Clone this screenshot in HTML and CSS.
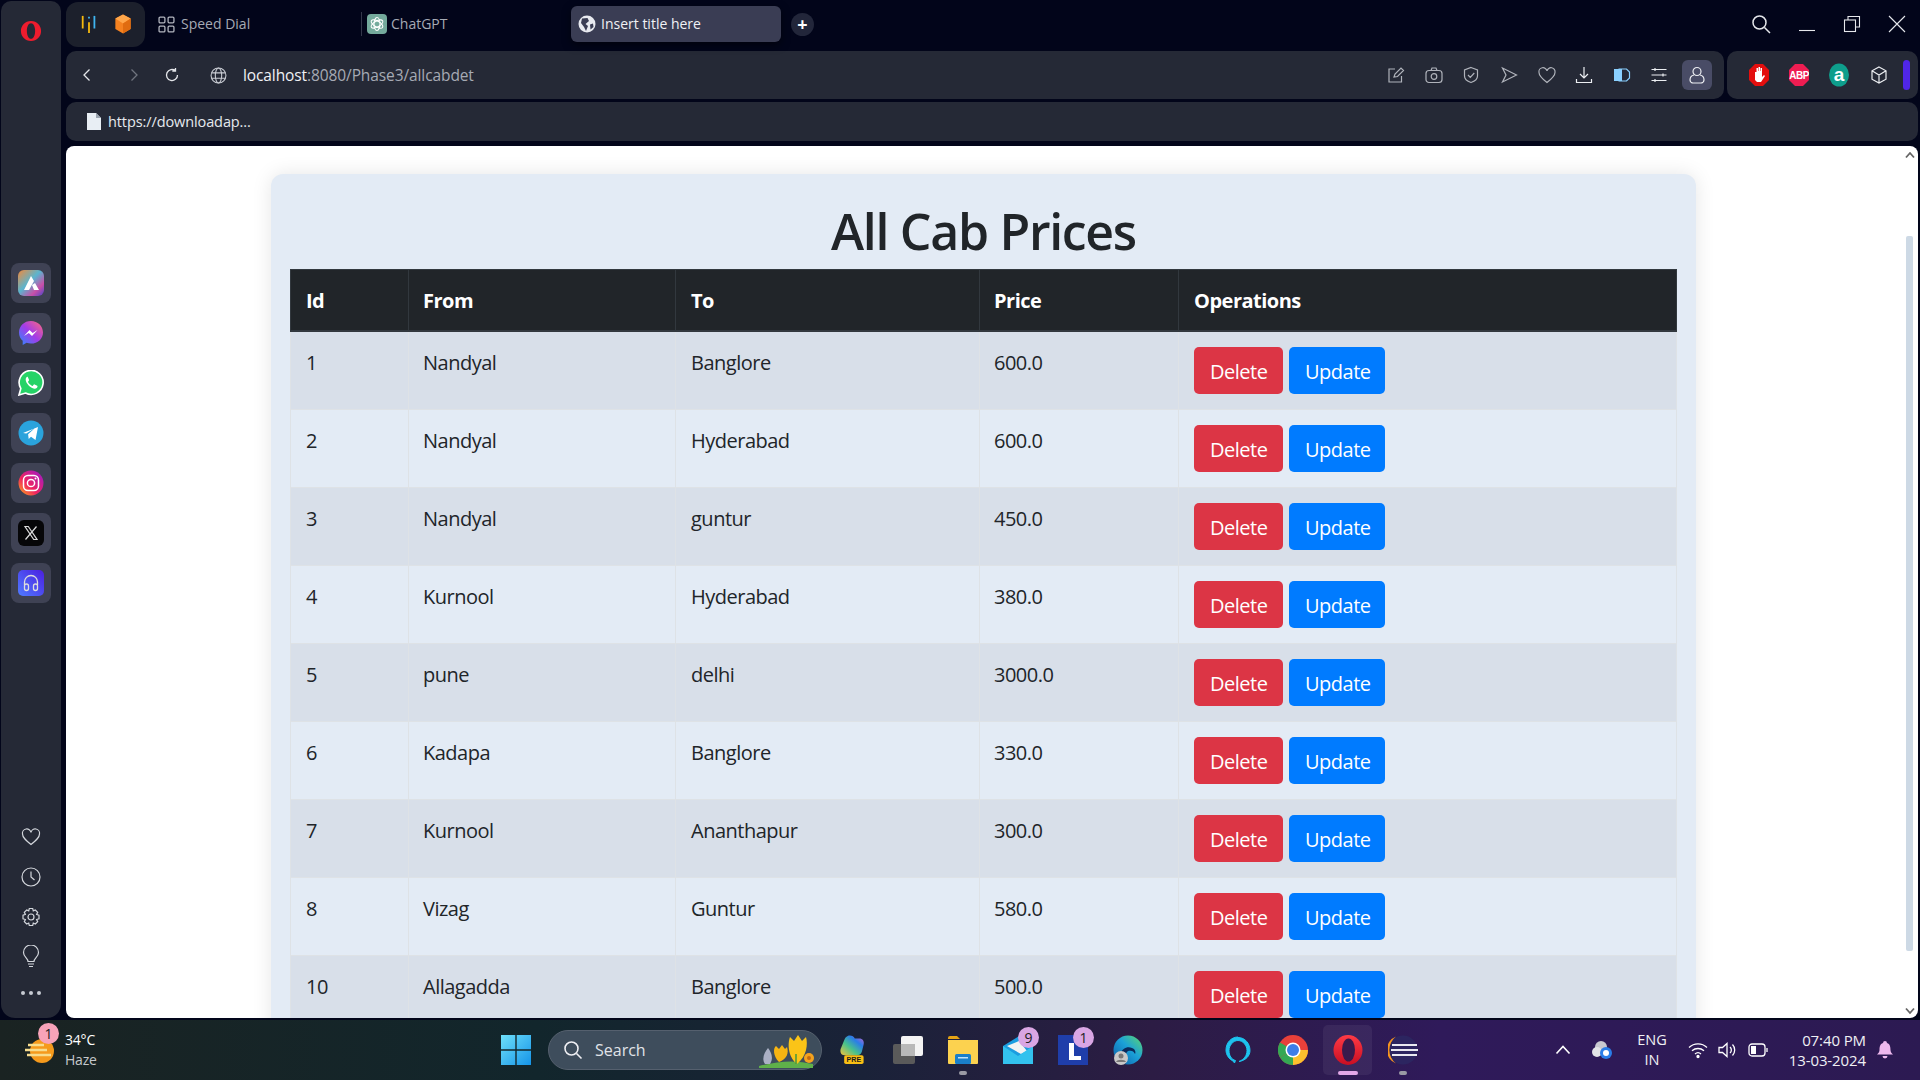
FILE: index.html
```html
<!DOCTYPE html>
<html lang="en">
<head>
<meta charset="utf-8">
<title>Insert title here</title>
<link rel="stylesheet" href="styles.css">
</head>
<body>
<div class="desktop">
  <div class="browser">
    <aside class="sidebar">
      <svg class="opera-logo" viewBox="0 0 24 24"><path fill-rule="evenodd" d="M12 1c6.500 0 11 5 11 11s-4.500 11-11 11S1 18 1 12 5.500 1 12 1zm0 2.500c-2.800 0-4.500 3.800-4.500 8.500s1.700 8.500 4.500 8.500 4.500-3.800 4.500-8.500S14.800 3.500 12 3.500z" fill="#ee1c2e"/></svg>
      <div class="side-apps">
        <div class="tile"><svg viewBox="0 0 26 26"><defs><linearGradient id="ga" x1="0" y1="0" x2="1" y2="1"><stop offset="0" stop-color="#f08a3c"/><stop offset=".45" stop-color="#5ab5cf"/><stop offset=".75" stop-color="#c84fa8"/><stop offset="1" stop-color="#4a44c8"/></linearGradient></defs><rect width="26" height="26" rx="6" fill="url(#ga)"/><path d="M6 20 13 6l3 5-5 9zM14 15l3-2 4 7h-5z" fill="#fff"/></svg></div>
        <div class="tile"><svg viewBox="0 0 26 26"><defs><linearGradient id="gm" x1="0" y1="1" x2="1" y2="0"><stop offset="0" stop-color="#2a8cff"/><stop offset=".5" stop-color="#a33be8"/><stop offset="1" stop-color="#ff6b7d"/></linearGradient></defs><path d="M13 1C6.200 1 1 5.900 1 12.400c0 3.400 1.400 6.300 3.700 8.300V25l3.900-2.200c1.400.5 2.900.7 4.400.7 6.800 0 12-4.900 12-11.100S19.800 1 13 1z" fill="url(#gm)"/><path d="m6 16 5.500-6 3.200 3 4.800-3-5.500 6-3.200-3z" fill="#fff"/></svg></div>
        <div class="tile"><svg viewBox="0 0 26 26"><path d="M1 25l1.800-6.500A12 12 0 1 1 7.500 23z" fill="#25d366" stroke="#fff" stroke-width="1.600"/><path d="M9.300 6.800c-.5 0-1.600.9-1.600 2.900 0 3.200 4.500 8.400 8.700 9 1.800.2 3.100-1.100 3.100-2.200 0-.5 0-.7-.3-.8l-2.700-1.300c-.4-.2-.6 0-.8.300l-.9 1.100c-.2.200-.4.200-.7.100-1.800-.8-3.200-2.100-4.100-3.800-.1-.3 0-.5.200-.7l.7-.9c.2-.2.200-.4.100-.7L9.900 7.200c-.2-.3-.3-.4-.6-.4z" fill="#fff"/></svg></div>
        <div class="tile"><svg viewBox="0 0 26 26"><circle cx="13" cy="13" r="12.500" fill="#2aa3dc"/><path d="M5 13 20 7l-2.500 13-4.500-3.300-2.300 2.200-.6-4.600 6.900-6.300-8.700 5.500z" fill="#fff"/></svg></div>
        <div class="tile"><svg viewBox="0 0 26 26"><defs><linearGradient id="gi" x1="0" y1="1" x2="1" y2="0"><stop offset="0" stop-color="#fdb414"/><stop offset=".4" stop-color="#f0245f"/><stop offset="1" stop-color="#9a18d0"/></linearGradient></defs><circle cx="13" cy="13" r="12.500" fill="url(#gi)"/><rect x="5.500" y="5.500" width="15" height="15" rx="4.500" fill="none" stroke="#fff" stroke-width="1.500"/><circle cx="13" cy="13" r="3.600" fill="none" stroke="#fff" stroke-width="1.500"/><circle cx="17.500" cy="8.500" r="1" fill="#fff"/></svg></div>
        <div class="tile"><svg viewBox="0 0 26 26"><rect width="26" height="26" rx="6" fill="#060608"/><path d="M7 6.500h3.300l8.700 13h-3.300zM18.500 6.500 7.500 19.500" fill="none" stroke="#ddd" stroke-width="1.200"/></svg></div>
        <div class="tile"><svg viewBox="0 0 26 26"><defs><linearGradient id="gh" x1="0" y1="1" x2="1" y2="0"><stop offset="0" stop-color="#4f7bff"/><stop offset="1" stop-color="#4b1fe0"/></linearGradient></defs><rect width="26" height="26" rx="5" fill="url(#gh)"/><path d="M6.500 15v-3a6.500 6.500 0 0 1 13 0v3" fill="none" stroke="#ddd" stroke-width="1.300"/><rect x="6.500" y="14" width="4" height="6.500" rx="2" fill="none" stroke="#ddd" stroke-width="1.300"/><rect x="15.500" y="14" width="4" height="6.500" rx="2" fill="none" stroke="#ddd" stroke-width="1.300"/></svg></div>
      </div>
      <div class="side-tools">
        <svg class="ico-side" viewBox="0 0 20 20"><path d="M10 17.500C5 13.500 1.500 10.700 1.500 7A4.200 4.200 0 0 1 10 5.500 4.200 4.200 0 0 1 18.500 7c0 3.700-3.500 6.500-8.500 10.500z"/></svg>
        <svg class="ico-side" viewBox="0 0 20 20"><circle cx="10" cy="10" r="9"/><path d="M10 4.500V10l3.500 3"/></svg>
        <svg class="ico-side" viewBox="0 0 20 20"><circle cx="10" cy="10" r="3"/><path d="M8.300 1.500h3.400l.6 2.400 2-.9 2.400 2.400-1.100 2.100 2.400.8v3.400l-2.400.8 1.100 2.100-2.400 2.400-2-1-.6 2.500H8.300l-.6-2.500-2 1-2.400-2.400 1.100-2.100-2.400-.8V8.200l2.400-.8-1.100-2.100L5.700 3l2 .9z"/></svg>
        <svg class="ico-side ico-bulb" viewBox="0 0 20 24"><path d="M7 16.500c0-3.500-4.500-4.500-4.500-9a7.500 7.500 0 0 1 15 0c0 4.500-4.500 5.500-4.500 9zM7 19h6M8 21.500h4"/></svg>
        <div class="dots"><i></i><i></i><i></i></div>
      </div>
    </aside>
    <div class="main-col">
      <header class="tabbar">
        <div class="pinned">
          <svg class="pin" viewBox="0 0 20 24"><path d="M3 3v14M3 3" stroke="#f5b90f" stroke-width="2"/><path d="M10 10v12" stroke="#f5b90f" stroke-width="2"/><path d="M10 4v2" stroke="#3fb4f0" stroke-width="2"/><path d="M16 3v14" stroke="#3fb4f0" stroke-width="2"/></svg>
          <svg class="pin" viewBox="0 0 20 24"><path d="M10 1.500 18.500 6v11.500L10 22.500 1.500 17.500V6z" fill="#f58220"/><path d="M10 11.500 18.500 6 10 1.500 1.500 6z" fill="#ffa64a"/><path d="M10 11.500v11l8.500-5V6z" fill="#e06c10"/></svg>
        </div>
        <div class="tab tab-dial">
          <svg class="dial-ico" viewBox="0 0 16 16"><rect x="1" y="1" width="5.500" height="5.500" rx="1"/><rect x="9.500" y="1" width="5.500" height="5.500" rx="1"/><rect x="1" y="9.500" width="5.500" height="5.500" rx="1"/><rect x="9.500" y="9.500" width="5.500" height="5.500" rx="1"/></svg>
          <span>Speed Dial</span>
        </div>
        <div class="tab tab-gpt">
          <svg class="gpt-ico" viewBox="0 0 20 20"><rect width="20" height="20" rx="4" fill="#74aa9c"/><g fill="none" stroke="#fff" stroke-width="1.100"><ellipse cx="10" cy="10" rx="3" ry="6.500"/><ellipse cx="10" cy="10" rx="3" ry="6.500" transform="rotate(60 10 10)"/><ellipse cx="10" cy="10" rx="3" ry="6.500" transform="rotate(120 10 10)"/></g></svg>
          <span>ChatGPT</span>
        </div>
        <div class="tab tab-active">
          <svg class="web-ico" viewBox="0 0 18 18"><circle cx="9" cy="9" r="8.500" fill="#e8eaf0"/><path d="M4 3.500 9.500 3 11 6 7.500 9l2.500 2-2 5L6 12 3 8zM12 9.500l3-1 .5 3.500-3 2.500z" fill="#3a3d54"/></svg>
          <span>Insert title here</span>
        </div>
        <div class="newtab">+</div>
        <div class="win-controls">
          <svg class="win-search" viewBox="0 0 20 20"><circle cx="8.500" cy="8.500" r="6.500"/><path d="m13.500 13.500 5.500 5.500"/></svg>
          <svg class="win-btn" viewBox="0 0 18 18"><path d="M1 15.500h16"/></svg>
          <svg class="win-btn" viewBox="0 0 18 18"><rect x="1.500" y="5" width="11" height="11.500"/><path d="M5 5V1.500h11.500V12H12.500"/></svg>
          <svg class="win-btn" viewBox="0 0 18 18"><path d="m1 1 16 16M17 1 1 17"/></svg>
        </div>
      </header>
      <div class="toolrow">
        <div class="addressbar">
          <svg class="nav-ico" viewBox="0 0 16 16"><path d="M10.500 2.500 5 8l5.500 5.500"/></svg>
          <svg class="nav-ico nav-dim" viewBox="0 0 16 16"><path d="M5.500 2.500 11 8l-5.500 5.500"/></svg>
          <svg class="nav-ico" viewBox="0 0 16 16"><path d="M13.500 8A5.500 5.500 0 1 1 11.500 3.800M11.500 1v3.200H8.300"/></svg>
          <svg class="nav-ico nav-globe" viewBox="0 0 16 16"><circle cx="8" cy="8" r="7"/><ellipse cx="8" cy="8" rx="3" ry="7"/><path d="M1.500 5.500h13M1.500 10.500h13"/></svg>
          <div class="url"><b>localhost</b>:8080/Phase3/allcabdet</div>
          <div class="addr-tools">
            <svg class="tool" viewBox="0 0 18 18"><path d="M14.500 10v6H2V3h6M7 11l1-3 6-6 2.500 2.500-6 6z"/></svg>
            <svg class="tool" viewBox="0 0 18 18"><rect x="1" y="4.500" width="16" height="12" rx="3"/><path d="M6 4.500 7 2h4l1 2.500"/><circle cx="9" cy="10.500" r="2.800"/></svg>
            <svg class="tool" viewBox="0 0 18 18"><path d="M9 1.500 15.500 4v6c0 3.500-3.500 5.500-6.500 6.500C6 15.500 2.500 13.500 2.500 10V4zM6 9l2.300 2.300L12.300 7"/></svg>
            <svg class="tool" viewBox="0 0 18 18"><path d="M2.500 2 16.500 9 2.500 16 6 9z"/></svg>
            <svg class="tool" viewBox="0 0 18 18"><path d="M9 16.500C4.500 13 1 10.200 1 6.500A4 4 0 0 1 9 5 4 4 0 0 1 17 6.500c0 3.700-3.500 6.500-8 10z"/></svg>
            <svg class="tool tool-bright" viewBox="0 0 18 18"><path d="M9 1v10.500M5 8l4 4 4-4M1.500 13v3.500h15V13"/></svg>
            <svg class="tool" viewBox="0 0 18 18"><path d="M5.500 3h8l3 3v6l-3 3h-8" stroke="#8ad0ff"/><path d="M1 3h8v12H1z" fill="#8ad0ff" stroke="none"/></svg>
            <svg class="tool tool-bright" viewBox="0 0 18 18"><path d="M1.500 3.500h15M1.500 9h15M1.500 14.500h15M5 2v3M13 7.500v3M5 13v3"/></svg>
            <div class="profile"><svg class="tool tool-bright" viewBox="0 0 18 18"><circle cx="9" cy="5.500" r="4"/><path d="M6 9c-3 .5-4 3-4 5 0 2 2 3 3 3h8c1 0 3-1 3-3 0-2-1-4.500-4-5"/></svg></div>
          </div>
        </div>
        <div class="extbar">
          <svg class="ext" viewBox="0 0 20 24"><path d="M6 1h8l6 6v10l-6 6H6l-6-6V7z" fill="#e30e0e"/><path d="M6 17V9h1.500v-4H9v3h.5V4H11v4h.5V5H13v9l2-2 1 1-4 6H8z" fill="#fff"/></svg>
          <svg class="ext" viewBox="0 0 20 24"><path d="M6 1h8l6 6v10l-6 6H6l-6-6V7z" fill="#ee1d52"/><text x="10" y="16" class="ext-abp">ABP</text></svg>
          <svg class="ext" viewBox="0 0 20 24"><ellipse cx="10" cy="12" rx="10" ry="11.500" fill="#0e9e8c"/><text x="10" y="18" class="ext-a">a</text></svg>
          <svg class="tool ext-box" viewBox="0 0 18 18"><path d="M9 1 16 4.800v8.400L9 17l-7-3.800V4.800zM2 4.800 9 9l7-4.200M9 9v8"/></svg>
          <div class="ext-bar"></div>
        </div>
      </div>
      <div class="bookmarks">
        <svg class="file-ico" viewBox="0 0 14 17"><path d="M0 0h9l5 5v12H0z" fill="#e8eef4"/><path d="M9 0v5h5" fill="#9aa4b0"/></svg>
        <span>https://downloadap...</span>
      </div>
      <div class="viewport">
        <main class="page">
          <section class="card">
            <h1>All Cab Prices</h1>
            <table class="prices">
              <colgroup><col class="c-id"><col class="c-from"><col class="c-to"><col class="c-price"><col></colgroup>
              <thead><tr><th>Id</th><th>From</th><th>To</th><th>Price</th><th>Operations</th></tr></thead>
              <tbody>
                <tr><td>1</td><td>Nandyal</td><td>Banglore</td><td>600.0</td><td class="ops"><a class="btn red">Delete</a><a class="btn blue">Update</a></td></tr>
                <tr><td>2</td><td>Nandyal</td><td>Hyderabad</td><td>600.0</td><td class="ops"><a class="btn red">Delete</a><a class="btn blue">Update</a></td></tr>
                <tr><td>3</td><td>Nandyal</td><td>guntur</td><td>450.0</td><td class="ops"><a class="btn red">Delete</a><a class="btn blue">Update</a></td></tr>
                <tr><td>4</td><td>Kurnool</td><td>Hyderabad</td><td>380.0</td><td class="ops"><a class="btn red">Delete</a><a class="btn blue">Update</a></td></tr>
                <tr><td>5</td><td>pune</td><td>delhi</td><td>3000.0</td><td class="ops"><a class="btn red">Delete</a><a class="btn blue">Update</a></td></tr>
                <tr><td>6</td><td>Kadapa</td><td>Banglore</td><td>330.0</td><td class="ops"><a class="btn red">Delete</a><a class="btn blue">Update</a></td></tr>
                <tr><td>7</td><td>Kurnool</td><td>Ananthapur</td><td>300.0</td><td class="ops"><a class="btn red">Delete</a><a class="btn blue">Update</a></td></tr>
                <tr><td>8</td><td>Vizag</td><td>Guntur</td><td>580.0</td><td class="ops"><a class="btn red">Delete</a><a class="btn blue">Update</a></td></tr>
                <tr><td>10</td><td>Allagadda</td><td>Banglore</td><td>500.0</td><td class="ops"><a class="btn red">Delete</a><a class="btn blue">Update</a></td></tr>
              </tbody>
            </table>
          </section>
        </main>
        <div class="scrollbar">
          <svg class="sb-arrow" viewBox="0 0 10 8"><path d="M1 6.500 5 2l4 4.500"/></svg>
          <div class="sb-thumb"></div>
          <svg class="sb-arrow" viewBox="0 0 10 8"><path d="M1 1.500 5 6l4-4.500"/></svg>
        </div>
      </div>
    </div>
  </div>
  <footer class="taskbar">
    <div class="weather">
      <div class="weather-ico">
        <svg viewBox="0 0 30 30"><circle cx="17" cy="16" r="12" fill="#f59a1c"/><path d="M3 10h16M0 15h22M2 20h24" stroke="#f7dc8c" stroke-width="2.600"/></svg>
        <span class="badge badge-pink">1</span>
      </div>
      <div class="weather-text"><span class="temp">34°C</span><span>Haze</span></div>
    </div>
    <div class="task-center">
      <svg class="winlogo" viewBox="0 0 30 30"><defs><linearGradient id="gw" x1="0" y1="0" x2="1" y2="1"><stop offset="0" stop-color="#6ee0fa"/><stop offset="1" stop-color="#1594e8"/></linearGradient></defs><path d="M0 0h14.300v14.300H0zM15.700 0H30v14.300H15.700zM0 15.700h14.300V30H0zM15.700 15.700H30V30H15.700z" fill="url(#gw)"/></svg>
      <div class="searchpill">
        <svg class="search-ico" viewBox="0 0 20 20"><circle cx="8.500" cy="8.500" r="6.500"/><path d="m13.500 13.500 5 5"/></svg>
        <span>Search</span>
        <svg class="flowers" viewBox="0 0 62 36"><path d="M2 34q30-8 54-2v4H2z" fill="#5fb04a"/><path d="M8 32c-4-6 0-12 3-16 3 4 6 10 2 16z" fill="#aab0c4"/><path d="M22 30c-6-6-6-14-3-16l3 3 3-4 3 4 2-2c2 6 0 12-8 15z" fill="#f7b512"/><path d="M40 32c-10-8-9-22-7-27l4 4 4-6 4 6 4-4c2 7 1 19-9 27z" fill="#fbc417"/><path d="M39 32V22" stroke="#4e9a3a" stroke-width="1.600"/><circle cx="52" cy="26" r="5" fill="#f4a21e"/><circle cx="52" cy="26" r="2" fill="#c46a10"/></svg>
      </div>
      <div class="task-icons">
        <div class="tk"><svg viewBox="0 0 30 34"><defs><linearGradient id="gc" x1="0" y1="1" x2="1" y2="0"><stop offset="0" stop-color="#f6c33a"/><stop offset=".4" stop-color="#47c28c"/><stop offset=".7" stop-color="#2a7de8"/><stop offset="1" stop-color="#d65fd0"/></linearGradient></defs><path d="M9 1c3-1 7 0 8 3l5 0c4 0 6 3 5 7l-2 8c-1 3-3 4-6 4H5c-3 0-5-3-4-7L5 6c1-3 2-4 4-5z" fill="url(#gc)"/><rect x="5" y="23" width="22" height="10" rx="2" fill="#f9bf14"/><text x="16" y="31" class="pre">PRE</text></svg></div>
        <div class="tk"><svg viewBox="0 0 30 30"><rect y="9" width="22" height="20" rx="2" fill="#5a5a5a"/><rect x="8" y="1" width="22" height="20" rx="2" fill="#f4f4f4"/><rect x="8" y="9" width="14" height="12" fill="#b9b9b9"/></svg></div>
        <div class="tk"><svg viewBox="0 0 30 30"><path d="M0 3a2 2 0 0 1 2-2h7l3 3h-12z" fill="#e6a414"/><path d="M0 5h30v23a1 1 0 0 1-1 1H1a1 1 0 0 1-1-1z" fill="#fcd24f"/><rect x="7" y="19" width="16" height="10" rx="1.500" fill="#1a7fc9"/><rect x="10" y="22" width="10" height="1.500" fill="#bfe3fa"/></svg><i class="run-dot"></i></div>
        <div class="tk"><svg viewBox="0 0 30 30"><path d="M0 11 16 1l14 10v18H0z" fill="#1b9de0"/><path d="m4 11 12-5 8 10-6 3z" fill="#f3f3f3"/><path d="M0 11 15 21 30 11v18H0z" fill="#33c2ee"/></svg><span class="badge badge-lilac">9</span></div>
        <div class="tk"><svg viewBox="0 0 30 30"><rect width="30" height="30" fill="#1f3eaa"/><path d="M11 8h5v13h7v4H11z" fill="#fff"/></svg><span class="badge badge-lilac">1</span></div>
        <div class="tk"><svg viewBox="0 0 30 30"><defs><linearGradient id="ge" x1="0" y1="1" x2="1" y2="0"><stop offset="0" stop-color="#0c59a4"/><stop offset=".55" stop-color="#1ba1d8"/><stop offset="1" stop-color="#5fd96c"/></linearGradient></defs><circle cx="15" cy="15" r="14.500" fill="url(#ge)"/><path d="M13 29c-4-2-6-6-5-11 1-4 6-7 11-5 3 1 4 4 3 6-1-3-4-4-7-3-3 2-4 8-2 13z" fill="#0b2a5a"/><circle cx="8" cy="23" r="7" fill="#c8c8c8"/><circle cx="8" cy="21" r="2.500" fill="#777"/><path d="M3 27c1-3 9-3 10 0z" fill="#777"/></svg></div>
      </div>
      <div class="task-icons task-icons-2">
        <div class="tk"><svg viewBox="0 0 30 30"><path d="M15 2C8 2 3 8 3 15c0 5 3 9 7 11l1.500 2 1-2.500c-4-1-6.500-5-6.500-10 0-5 4-10 9-10s9 5 9 10c0 5-3 9-8 11 7-1 11-6 11-11 0-7-5-13-12-13z" fill="#1dc3ee" stroke="#1dc3ee"/></svg></div>
        <div class="tk"><svg viewBox="0 0 30 30"><circle cx="15" cy="15" r="15" fill="#e8403a"/><path d="M15 15 2 22.500A15 15 0 0 0 15 30z" fill="#34a853"/><path d="M15 15h15A15 15 0 0 1 15 30z" fill="#fbc02d"/><path d="M15 15 2 7.500A15 15 0 0 0 2 22.500z" fill="#34a853"/><circle cx="15" cy="15" r="7.500" fill="#fff"/><circle cx="15" cy="15" r="6" fill="#3d7de8"/></svg></div>
        <div class="tk tk-active"><svg viewBox="0 0 30 30"><defs><linearGradient id="go" x1="0" y1="0" x2="0" y2="1"><stop offset="0" stop-color="#ff3b45"/><stop offset="1" stop-color="#c80e22"/></linearGradient></defs><ellipse cx="15" cy="15" rx="14.500" ry="15" fill="url(#go)"/><ellipse cx="15.500" cy="15" rx="6.500" ry="11.500" fill="#3a1a4c"/></svg><i class="run-bar"></i></div>
        <div class="tk"><svg viewBox="0 0 30 30"><circle cx="15" cy="15" r="14.500" fill="#2c2560"/><path d="M8 1.500A14.500 14.500 0 0 0 8 28.500 17 17 0 0 1 8 1.500z" fill="#f7941e"/><path d="M4 10h25M3 15h27M4 20h25" stroke="#e9e9f0" stroke-width="2.200"/></svg><i class="run-dot"></i></div>
      </div>
    </div>
    <div class="tray">
      <svg class="tray-chev" viewBox="0 0 16 10"><path d="m1.500 8.500 6.500-7 6.500 7"/></svg>
      <svg class="tray-cloud" viewBox="0 0 22 20"><circle cx="10" cy="7" r="6" fill="#c9c9d0"/><circle cx="6" cy="12" r="5" fill="#e3e3e6"/><circle cx="15" cy="13" r="6" fill="#2a7de8"/><circle cx="15" cy="13" r="3" fill="#fff"/></svg>
      <div class="lang"><span>ENG</span><span>IN</span></div>
      <svg class="tray-ico wifi" viewBox="0 0 20 18"><path d="M1 6.500a13 13 0 0 1 18 0M4 9.800a9 9 0 0 1 12 0M7 13a4.500 4.500 0 0 1 6 0"/><circle cx="10" cy="15.500" r="1" fill="#fff"/></svg>
      <svg class="tray-ico sound" viewBox="0 0 20 18"><path d="M1 6.500h3.500L9 2.500v13l-4.500-4H1zM12 6a4 4 0 0 1 0 6M14.500 3.500a8 8 0 0 1 0 11"/></svg>
      <svg class="tray-ico batt" viewBox="0 0 20 14"><rect x="1" y="1" width="16" height="12" rx="3"/><rect x="3" y="3" width="5" height="8" fill="#fff" stroke="none"/><path d="M19 5v4"/></svg>
      <div class="clock"><span>07:40 PM</span><span>13-03-2024</span></div>
      <svg class="bell" viewBox="0 0 18 20"><path d="M9 1a2 2 0 0 1 2 2c3 1 3.500 4 3.500 7 0 2 1 3 2.500 4.500H1C2.500 13 3.500 12 3.500 10c0-3 .5-6 3.500-7a2 2 0 0 1 2-2zM6.500 16h5a2.500 2.500 0 0 1-5 0z" fill="#eeb9ee"/></svg>
    </div>
  </footer>
</div>
</body>
</html>
```

FILE: styles.css
```css
* { box-sizing: border-box; }
html, body { margin: 0; height: 100%; overflow: hidden; }
body { font-family: "Open Sans", "Noto Sans", sans-serif; background: #02051a; }
.desktop { width: 1920px; height: 1080px; display: flex; flex-direction: column; background: #02051a; }

/* browser chrome */
.browser { height: 1020px; display: flex; padding: 0 2px 2px 1px; }
.sidebar { width: 60px; margin-top: 1px; background: #252936; border-radius: 10px 10px 14px 14px; display: flex; flex-direction: column; align-items: center; }
.opera-logo { width: 22px; height: 22px; margin-top: 19px; }
.side-apps { margin-top: 221px; display: flex; flex-direction: column; gap: 10px; }
.tile { width: 40px; height: 40px; background: #3f4254; border-radius: 8px; display: flex; align-items: center; justify-content: center; }
.tile svg { width: 26px; height: 26px; }
.side-tools { margin-top: auto; display: flex; flex-direction: column; align-items: center; gap: 20px; padding-bottom: 23px; }
.ico-side { width: 20px; height: 20px; fill: none; stroke: #d3d6dc; stroke-width: 1.200; }
.ico-bulb { height: 24px; margin-top: -2px; }
.dots { display: flex; gap: 4px; margin-top: 2px; }
.dots i { width: 4px; height: 4px; border-radius: 50%; background: #c7cad2; }

.main-col { flex: 1; margin-left: 5px; display: flex; flex-direction: column; min-width: 0; }
.tabbar { height: 51px; display: flex; align-items: center; color: #a6aab4; font-size: 14px; position: relative; padding-bottom: 3px; }
.pinned { width: 79px; height: 45px; background: #1c202c; border-radius: 12px; display: flex; align-items: center; justify-content: center; gap: 16px; }
.pin { width: 18px; height: 22px; }
.tab { display: flex; align-items: center; height: 36px; white-space: nowrap; }
.tab span { margin-top: -2px; }
.tab-dial { width: 216px; padding-left: 13px; gap: 6px; }
.dial-ico { width: 17px; height: 17px; fill: none; stroke: #b3b6bf; stroke-width: 1.200; }
.tab-gpt { width: 210px; border-left: 1px solid #33374a; padding-left: 5px; gap: 4px; height: 24px; }
.gpt-ico { width: 20px; height: 20px; }
.tab-active { width: 210px; background: #3a3d54; color: #f0f1f5; border-radius: 6px; padding-left: 7px; gap: 5px; box-shadow: 0 3px 8px rgba(0,0,0,.5); }
.web-ico { width: 18px; height: 18px; }
.newtab { width: 23px; height: 23px; margin-left: 10px; border-radius: 50%; background: #22263a; color: #fff; font-size: 18px; font-weight: 700; display: flex; align-items: center; justify-content: center; line-height: 1; }
.win-controls { margin-left: auto; display: flex; align-items: center; gap: 27px; padding-right: 12px; }
.win-search { width: 20px; height: 20px; fill: none; stroke: #e4e6ea; stroke-width: 1.500; }
.win-btn { width: 18px; height: 18px; fill: none; stroke: #e6e8ec; stroke-width: 1.100; }

.toolrow { height: 48px; display: flex; gap: 3px; }
.addressbar { width: 1658px; background: #252936; border-radius: 10px; display: flex; align-items: center; padding-left: 13px; }
.nav-ico { width: 16px; height: 16px; fill: none; stroke: #e4e6ea; stroke-width: 1.300; margin-right: 31px; }
.nav-dim { stroke: #70747f; margin-right: 22px; }
.nav-globe { width: 17px; height: 17px; margin-left: -1px; margin-right: 16px; stroke: #c9ccd3; stroke-width: 1; }
.url { color: #a6aab4; font-size: 15.500px; letter-spacing: -.1px; white-space: nowrap; }
.url b { font-weight: 400; color: #f0f1f5; }
.addr-tools { margin-left: auto; display: flex; align-items: center; gap: 19.600px; padding-right: 12px; }
.tool { width: 18px; height: 18px; fill: none; stroke: #b0b3bb; stroke-width: 1.200; flex: none; }
.tool-bright { stroke: #eceef2; }
.profile { width: 30px; height: 30px; margin-left: -6px; border-radius: 6px; background: #494c66; display: flex; align-items: center; justify-content: center; }
.extbar { flex: 1; background: #252936; border-radius: 10px; display: flex; align-items: center; gap: 20px; padding-left: 22px; }
.ext { width: 20px; height: 24px; }
.ext-abp { font-family: "Liberation Sans", sans-serif; font-size: 10px; font-weight: 700; fill: #fff; text-anchor: middle; letter-spacing: -.5px; }
.ext-a { font-family: "Liberation Sans", sans-serif; font-size: 19px; font-weight: 700; fill: #fff; text-anchor: middle; }
.ext-box { margin-left: 1px; stroke: #eceef2; }
.ext-bar { width: 7px; height: 30px; margin-left: -5px; background: #5026e8; border-radius: 4px; }

.bookmarks { height: 39px; margin-top: 3px; background: #252936; border-radius: 10px; display: flex; align-items: center; padding-left: 21px; gap: 7px; color: #e6e9ee; font-size: 14.500px; letter-spacing: -.1px; }
.file-ico { width: 14px; height: 17px; }

/* page */
.viewport { flex: 1; margin-top: 5px; min-height: 0; background: #fff; border-radius: 8px; overflow: hidden; display: flex; }
.page { flex: 1; min-width: 0; padding-top: 28px; display: flex; justify-content: center; }
.scrollbar { width: 17px; display: flex; flex-direction: column; align-items: center; padding: 5px 0 3px 0; }
.sb-arrow { width: 10px; height: 8px; fill: none; stroke: #666; stroke-width: 1.800; flex: none; }
.sb-thumb { width: 7px; height: 715px; margin-top: 77px; margin-bottom: auto; background: #cdd9e5; border-radius: 2px; }
.card { width: 1425px; height: max-content; background: #e3ebf5; border-radius: 12px; box-shadow: 0 0 20px rgba(0,0,0,.1); padding: 25px 19px; color: #212529; }
.card h1 { margin: 0 0 10px; padding-top: 2px; height: 60px; text-align: center; font-size: 50px; line-height: 60px; font-weight: 600; letter-spacing: -1.300px; }
.prices { width: 1387px; table-layout: fixed; border-collapse: collapse; font-size: 20px; line-height: 30px; }
.c-id { width: 118px; }
.c-from { width: 267px; }
.c-to { width: 304px; }
.c-price { width: 199px; }
.prices th, .prices td { padding: 16px 15px 14px; border: 1px solid #dee2e6; text-align: left; vertical-align: top; letter-spacing: -.5px; white-space: nowrap; }
.prices th:nth-child(2), .prices td:nth-child(2), .prices th:nth-child(4), .prices td:nth-child(4) { padding-left: 14px; }
.prices thead th { background: #212529; color: #fff; border-color: #32383e; border-bottom-width: 2px; font-weight: 700; }
.prices td { height: 78px; }
.prices td.ops { padding-top: 15px; padding-bottom: 15px; }
.prices tbody tr:nth-child(odd) td { background: #d8dfe9; }
.btn { display: inline-block; height: 47px; padding: 10px 16px 6px; line-height: 30px; border-radius: 5px; color: #fff; }
.btn.red { background: #dc3545; width: 89px; margin-right: 6px; }
.btn.blue { background: #007bff; width: 96px; }

/* taskbar */
.taskbar { height: 60px; display: flex; align-items: center; color: #f0f0f4; font-size: 14px; background: linear-gradient(90deg, #1a2322 0%, #12262c 28%, #1a2238 45%, #2c1c44 60%, #2f1a5a 75%, #2c1a52 100%); }
.weather { width: 501px; flex: none; display: flex; align-items: center; padding-left: 25px; gap: 10px; }
.weather-ico { width: 30px; height: 30px; position: relative; }
.weather-ico svg { width: 30px; height: 30px; display: block; }
.weather-text { display: flex; flex-direction: column; line-height: 20px; color: #c5c8cc; letter-spacing: -.2px; }
.temp { color: #fff; }
.badge { position: absolute; width: 21px; height: 21px; border-radius: 50%; display: flex; align-items: center; justify-content: center; font-size: 14px; color: #222; line-height: 1; }
.badge-pink { background: #f7a3b8; top: -12px; right: -4px; }
.badge-lilac { background: #d9a6e4; top: 2px; right: 6px; }
.task-center { display: flex; align-items: center; }
.winlogo { width: 30px; height: 30px; }
.searchpill { width: 274px; height: 40px; margin-left: 17px; border-radius: 20px; background: #3e4d5c; border: 1px solid #55606e; display: flex; align-items: center; padding-left: 14px; gap: 12px; color: #e0e3e8; font-size: 16px; position: relative; }
.search-ico { width: 20px; height: 20px; fill: none; stroke: #f0f0f4; stroke-width: 1.600; }
.flowers { position: absolute; right: 2px; top: 1px; width: 62px; height: 36px; }
.task-icons { display: flex; margin-left: 3px; }
.task-icons-2 { margin-left: 55px; }
.tk { width: 55px; height: 50px; display: flex; align-items: center; justify-content: center; position: relative; border-radius: 5px; }
.tk svg { width: 30px; height: 30px; }
.tk .pre { font-family: "Liberation Sans", sans-serif; font-size: 8px; font-weight: 700; fill: #1c1c1c; text-anchor: middle; }
.tk-active { background: rgba(255,255,255,.06); width: 49px; margin: 0 3px; }
.run-dot { position: absolute; bottom: 0; left: 50%; margin-left: -4px; width: 8px; height: 4px; border-radius: 2px; background: #9a9aa4; }
.run-bar { position: absolute; bottom: 0; left: 50%; margin-left: -10px; width: 20px; height: 4px; border-radius: 2px; background: #e3a8e8; }
.tray { margin-left: auto; display: flex; align-items: center; padding-right: 26px; position: relative; }
.tray-chev { width: 16px; height: 10px; fill: none; stroke: #fff; stroke-width: 1.600; margin-right: 20px; }
.tray-cloud { width: 22px; height: 20px; margin-right: 17px; }
.lang { width: 44px; display: flex; flex-direction: column; align-items: center; font-size: 14.500px; line-height: 20px; margin-right: 14px; }
.tray-ico { width: 20px; height: 18px; fill: none; stroke: #fff; stroke-width: 1.300; margin-right: 10px; }
.batt { height: 14px; }
.clock { width: 80px; display: flex; flex-direction: column; align-items: flex-end; font-size: 15px; line-height: 20px; letter-spacing: -.1px; white-space: nowrap; margin-left: 8px; }
.bell { width: 18px; height: 20px; margin-left: 10px; }
```
